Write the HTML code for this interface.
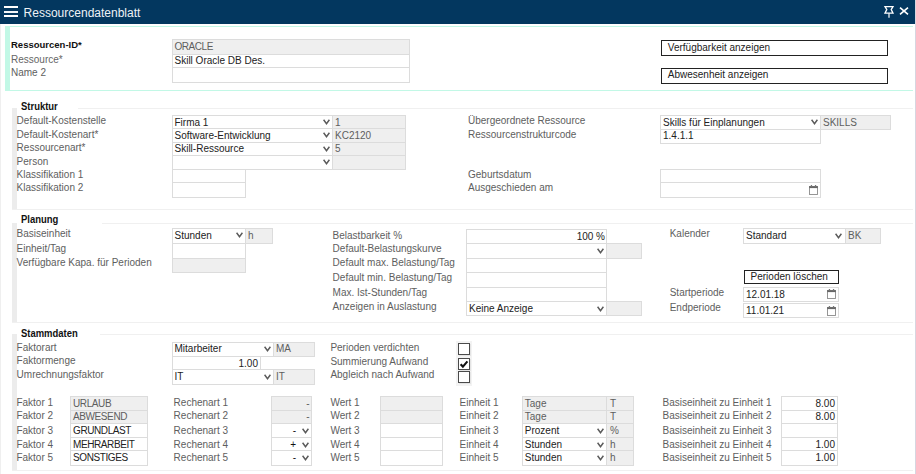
<!DOCTYPE html>
<html><head><meta charset="utf-8"><style>
html,body{margin:0;padding:0;background:#fff;width:916px;height:474px;overflow:hidden;position:relative;font-family:"Liberation Sans",sans-serif}
.b{position:absolute;box-sizing:border-box;border:1px solid #dcdcdc}
.r{position:absolute;display:block}
.t{position:absolute;white-space:nowrap}
</style></head><body>
<div class="r" style="left:0px;top:0px;width:915px;height:24px;background:#03375f"></div>
<div class="r" style="left:915px;top:0px;width:1px;height:474px;background:#d6d6e0"></div>
<div class="r" style="left:0px;top:24px;width:1px;height:450px;background:#efefef"></div>
<div class="r" style="left:4px;top:6px;width:14px;height:2px;background:#fff"></div>
<div class="r" style="left:4px;top:11px;width:14px;height:1.6999999999999993px;background:#f4f6f8"></div>
<div class="r" style="left:4px;top:15px;width:14px;height:2px;background:#fff"></div>
<div class="t" style="left:23.6px;top:7px;font-size:12px;line-height:12px;color:#eef2f6;">Ressourcendatenblatt</div>
<svg class="r" style="left:883px;top:5px" width="12" height="14" viewBox="0 0 12 14"><path d="M2 1.6 H10 L8.2 4.6 L10 8.2 H2 L3.8 4.6 Z" fill="none" stroke="#fff" stroke-width="1.3" stroke-linejoin="miter"/><path d="M6 8.2 V12.8" stroke="#fff" stroke-width="1.2"/></svg>
<svg class="r" style="left:899px;top:7px" width="10" height="8" viewBox="0 0 10 8"><path d="M1 0.6 L9 7.4 M9 0.6 L1 7.4" fill="none" stroke="#fff" stroke-width="1.6"/></svg>
<div class="r" style="left:5px;top:26px;width:908px;height:1px;background:#c2f8e6"></div>
<div class="r" style="left:5px;top:90px;width:908px;height:1px;background:#c2f8e6"></div>
<div class="r" style="left:5px;top:26px;width:5px;height:65px;background:#c2f8e6"></div>
<div class="t" style="left:11px;top:40px;font-size:9.5px;line-height:9.5px;color:#111;font-weight:bold;">Ressourcen-ID*</div>
<div class="t" style="left:11px;top:55px;font-size:10px;line-height:10px;color:#666;">Ressource*</div>
<div class="t" style="left:11px;top:68px;font-size:10px;line-height:10px;color:#5e5e5e;">Name 2</div>
<div class="b" style="left:172px;top:39px;width:238px;height:16px;background:#efefef;border-color:#dcdcdc;"></div>
<div class="b" style="left:172px;top:54px;width:238px;height:14px;background:#fff;border-color:#dcdcdc;"></div>
<div class="b" style="left:172px;top:67px;width:238px;height:16px;background:#fff;border-color:#dcdcdc;"></div>
<div class="t" style="left:174.5px;top:42px;font-size:10px;line-height:10px;color:#5e5e5e;letter-spacing:-0.45px;">ORACLE</div>
<div class="t" style="left:174.5px;top:56px;font-size:10px;line-height:10px;color:#222;">Skill Oracle DB Des.</div>
<div class="b" style="left:661px;top:40px;width:227px;height:16px;background:#fff;border-color:#222;"></div>
<div class="b" style="left:661px;top:68px;width:227px;height:16px;background:#fff;border-color:#222;"></div>
<div class="t" style="left:667.8px;top:43px;font-size:10px;line-height:10px;color:#222;">Verfügbarkeit anzeigen</div>
<div class="t" style="left:667.8px;top:70px;font-size:10px;line-height:10px;color:#222;">Abwesenheit anzeigen</div>
<div class="r" style="left:12px;top:108px;width:5px;height:102px;background:#ececec"></div>
<div class="r" style="left:78px;top:108px;width:835px;height:1px;background:#f0f0f0"></div>
<div class="r" style="left:12px;top:209px;width:901px;height:1px;background:#f0f0f0"></div>
<div class="t" style="left:20.5px;top:101px;font-size:10.5px;line-height:10.5px;color:#111;font-weight:bold;transform:scaleX(0.9);transform-origin:0 0">Struktur</div>
<div class="r" style="left:12px;top:223px;width:5px;height:100px;background:#ececec"></div>
<div class="r" style="left:102px;top:223px;width:811px;height:1px;background:#f0f0f0"></div>
<div class="r" style="left:12px;top:322px;width:901px;height:1px;background:#f0f0f0"></div>
<div class="t" style="left:20.5px;top:214px;font-size:10.5px;line-height:10.5px;color:#111;font-weight:bold;transform:scaleX(0.9);transform-origin:0 0">Planung</div>
<div class="r" style="left:12px;top:334px;width:5px;height:137px;background:#ececec"></div>
<div class="r" style="left:100px;top:334px;width:813px;height:1px;background:#f0f0f0"></div>
<div class="r" style="left:12px;top:470px;width:901px;height:1px;background:#f0f0f0"></div>
<div class="t" style="left:20.5px;top:328px;font-size:10.5px;line-height:10.5px;color:#111;font-weight:bold;transform:scaleX(0.9);transform-origin:0 0">Stammdaten</div>
<div class="t" style="left:16.6px;top:116px;font-size:10px;line-height:10px;color:#5e5e5e;">Default-Kostenstelle</div>
<div class="t" style="left:16.6px;top:130px;font-size:10px;line-height:10px;color:#5e5e5e;">Default-Kostenart*</div>
<div class="t" style="left:16.6px;top:143px;font-size:10px;line-height:10px;color:#5e5e5e;">Ressourcenart*</div>
<div class="t" style="left:16.6px;top:157px;font-size:10px;line-height:10px;color:#5e5e5e;">Person</div>
<div class="t" style="left:16.6px;top:170px;font-size:10px;line-height:10px;color:#5e5e5e;">Klassifikation 1</div>
<div class="t" style="left:16.6px;top:183px;font-size:10px;line-height:10px;color:#5e5e5e;">Klassifikation 2</div>
<div class="b" style="left:332px;top:115px;width:74px;height:14px;background:#efefef;border-color:#dcdcdc;"></div>
<div class="b" style="left:332px;top:128px;width:74px;height:15px;background:#efefef;border-color:#dcdcdc;"></div>
<div class="b" style="left:332px;top:142px;width:74px;height:14px;background:#efefef;border-color:#dcdcdc;"></div>
<div class="b" style="left:332px;top:155px;width:74px;height:15px;background:#efefef;border-color:#dcdcdc;"></div>
<div class="b" style="left:172px;top:115px;width:161px;height:14px;background:#fff;border-color:#dcdcdc;"></div>
<div class="b" style="left:172px;top:128px;width:161px;height:15px;background:#fff;border-color:#dcdcdc;"></div>
<div class="b" style="left:172px;top:142px;width:161px;height:14px;background:#fff;border-color:#dcdcdc;"></div>
<div class="b" style="left:172px;top:155px;width:161px;height:15px;background:#fff;border-color:#dcdcdc;"></div>
<svg class="r" style="left:323px;top:119px" width="7" height="6" viewBox="0 0 7 6"><path d="M0.6 0.8 L3.5 4.7 L6.4 0.8" fill="none" stroke="#5a5a5a" stroke-width="1.45"/></svg>
<div class="t" style="left:174.5px;top:118px;font-size:10px;line-height:10px;color:#222;">Firma 1</div>
<div class="t" style="left:335px;top:118px;font-size:10px;line-height:10px;color:#5e5e5e;">1</div>
<svg class="r" style="left:323px;top:132px" width="7" height="6" viewBox="0 0 7 6"><path d="M0.6 0.8 L3.5 4.7 L6.4 0.8" fill="none" stroke="#5a5a5a" stroke-width="1.45"/></svg>
<div class="t" style="left:174.5px;top:131px;font-size:10px;line-height:10px;color:#222;">Software-Entwicklung</div>
<div class="t" style="left:335px;top:131px;font-size:10px;line-height:10px;color:#5e5e5e;">KC2120</div>
<svg class="r" style="left:323px;top:146px" width="7" height="6" viewBox="0 0 7 6"><path d="M0.6 0.8 L3.5 4.7 L6.4 0.8" fill="none" stroke="#5a5a5a" stroke-width="1.45"/></svg>
<div class="t" style="left:174.5px;top:144px;font-size:10px;line-height:10px;color:#222;">Skill-Ressource</div>
<div class="t" style="left:335px;top:144px;font-size:10px;line-height:10px;color:#5e5e5e;">5</div>
<svg class="r" style="left:323px;top:159px" width="7" height="6" viewBox="0 0 7 6"><path d="M0.6 0.8 L3.5 4.7 L6.4 0.8" fill="none" stroke="#5a5a5a" stroke-width="1.45"/></svg>
<div class="b" style="left:172px;top:169px;width:74px;height:14px;background:#fff;border-color:#dcdcdc;"></div>
<div class="b" style="left:172px;top:182px;width:74px;height:16px;background:#fff;border-color:#dcdcdc;"></div>
<div class="t" style="left:468px;top:116px;font-size:10px;line-height:10px;color:#5e5e5e;">Übergeordnete Ressource</div>
<div class="t" style="left:468px;top:130px;font-size:10px;line-height:10px;color:#5e5e5e;">Ressourcenstrukturcode</div>
<div class="t" style="left:468px;top:170px;font-size:10px;line-height:10px;color:#5e5e5e;">Geburtsdatum</div>
<div class="t" style="left:468px;top:183px;font-size:10px;line-height:10px;color:#5e5e5e;">Ausgeschieden am</div>
<div class="b" style="left:820px;top:115px;width:71px;height:15px;background:#efefef;border-color:#dcdcdc;"></div>
<div class="b" style="left:660px;top:115px;width:161px;height:15px;background:#fff;border-color:#dcdcdc;"></div>
<div class="b" style="left:660px;top:129px;width:161px;height:15px;background:#fff;border-color:#dcdcdc;"></div>
<svg class="r" style="left:811px;top:119px" width="7" height="6" viewBox="0 0 7 6"><path d="M0.6 0.8 L3.5 4.7 L6.4 0.8" fill="none" stroke="#5a5a5a" stroke-width="1.45"/></svg>
<div class="t" style="left:663px;top:118px;font-size:10px;line-height:10px;color:#222;">Skills für Einplanungen</div>
<div class="t" style="left:823px;top:118px;font-size:10px;line-height:10px;color:#5e5e5e;">SKILLS</div>
<div class="t" style="left:663px;top:131px;font-size:10px;line-height:10px;color:#222;">1.4.1.1</div>
<div class="b" style="left:660px;top:169px;width:161px;height:14px;background:#fff;border-color:#dcdcdc;"></div>
<div class="b" style="left:660px;top:182px;width:161px;height:16px;background:#fff;border-color:#dcdcdc;"></div>
<svg class="r" style="left:809px;top:185px" width="9" height="10" viewBox="0 0 9 10"><rect x="0.5" y="1.5" width="8" height="8" fill="#fff" stroke="#8a8a8a" stroke-width="0.9"/><rect x="0.2" y="1.2" width="8.6" height="1.9" fill="#666"/><rect x="1.8" y="0" width="1.3" height="1.6" fill="#777"/><rect x="5.9" y="0" width="1.3" height="1.6" fill="#777"/></svg>
<div class="t" style="left:16.6px;top:229px;font-size:10px;line-height:10px;color:#5e5e5e;">Basiseinheit</div>
<div class="t" style="left:16.6px;top:244px;font-size:10px;line-height:10px;color:#5e5e5e;">Einheit/Tag</div>
<div class="t" style="left:16.6px;top:258px;font-size:10px;line-height:10px;color:#5e5e5e;">Verfügbare Kapa. für Perioden</div>
<div class="b" style="left:245px;top:228px;width:28px;height:16px;background:#efefef;border-color:#dcdcdc;"></div>
<div class="b" style="left:172px;top:228px;width:74px;height:16px;background:#fff;border-color:#dcdcdc;"></div>
<div class="b" style="left:172px;top:243px;width:74px;height:16px;background:#fff;border-color:#dcdcdc;"></div>
<div class="b" style="left:172px;top:258px;width:74px;height:15px;background:#efefef;border-color:#dcdcdc;"></div>
<svg class="r" style="left:236px;top:232px" width="7" height="6" viewBox="0 0 7 6"><path d="M0.6 0.8 L3.5 4.7 L6.4 0.8" fill="none" stroke="#5a5a5a" stroke-width="1.45"/></svg>
<div class="t" style="left:174.5px;top:231px;font-size:10px;line-height:10px;color:#222;">Stunden</div>
<div class="t" style="left:248px;top:231px;font-size:10px;line-height:10px;color:#5e5e5e;">h</div>
<div class="t" style="left:332.6px;top:231px;font-size:10px;line-height:10px;color:#5e5e5e;">Belastbarkeit %</div>
<div class="t" style="left:332.6px;top:244px;font-size:10px;line-height:10px;color:#5e5e5e;">Default-Belastungskurve</div>
<div class="t" style="left:332.6px;top:258px;font-size:10px;line-height:10px;color:#5e5e5e;">Default max. Belastung/Tag</div>
<div class="t" style="left:332.6px;top:273px;font-size:10px;line-height:10px;color:#5e5e5e;">Default min. Belastung/Tag</div>
<div class="t" style="left:332.6px;top:288px;font-size:10px;line-height:10px;color:#5e5e5e;">Max. Ist-Stunden/Tag</div>
<div class="t" style="left:332.6px;top:302px;font-size:10px;line-height:10px;color:#5e5e5e;">Anzeigen in Auslastung</div>
<div class="b" style="left:606px;top:243px;width:36px;height:16px;background:#efefef;border-color:#dcdcdc;"></div>
<div class="b" style="left:606px;top:301px;width:36px;height:15px;background:#efefef;border-color:#dcdcdc;"></div>
<div class="b" style="left:466px;top:229px;width:141px;height:15px;background:#fff;border-color:#dcdcdc;"></div>
<div class="b" style="left:466px;top:243px;width:141px;height:16px;background:#fff;border-color:#dcdcdc;"></div>
<div class="b" style="left:466px;top:258px;width:141px;height:15px;background:#fff;border-color:#dcdcdc;"></div>
<div class="b" style="left:466px;top:272px;width:141px;height:16px;background:#fff;border-color:#dcdcdc;"></div>
<div class="b" style="left:466px;top:287px;width:141px;height:15px;background:#fff;border-color:#dcdcdc;"></div>
<div class="b" style="left:466px;top:301px;width:141px;height:15px;background:#fff;border-color:#dcdcdc;"></div>
<div class="t" style="right:311px;top:232px;font-size:10px;line-height:10px;color:#222;">100 %</div>
<svg class="r" style="left:597px;top:247.5px" width="7" height="6" viewBox="0 0 7 6"><path d="M0.6 0.8 L3.5 4.7 L6.4 0.8" fill="none" stroke="#5a5a5a" stroke-width="1.45"/></svg>
<svg class="r" style="left:597px;top:305.5px" width="7" height="6" viewBox="0 0 7 6"><path d="M0.6 0.8 L3.5 4.7 L6.4 0.8" fill="none" stroke="#5a5a5a" stroke-width="1.45"/></svg>
<div class="t" style="left:469px;top:304px;font-size:10px;line-height:10px;color:#222;">Keine Anzeige</div>
<div class="t" style="left:669.7px;top:229px;font-size:10px;line-height:10px;color:#5e5e5e;">Kalender</div>
<div class="t" style="left:669.7px;top:288px;font-size:10px;line-height:10px;color:#5e5e5e;">Startperiode</div>
<div class="t" style="left:669.7px;top:303px;font-size:10px;line-height:10px;color:#5e5e5e;">Endperiode</div>
<div class="b" style="left:845px;top:228px;width:36px;height:16px;background:#efefef;border-color:#dcdcdc;"></div>
<div class="b" style="left:743px;top:228px;width:103px;height:16px;background:#fff;border-color:#dcdcdc;"></div>
<svg class="r" style="left:835px;top:232.5px" width="7" height="6" viewBox="0 0 7 6"><path d="M0.6 0.8 L3.5 4.7 L6.4 0.8" fill="none" stroke="#5a5a5a" stroke-width="1.45"/></svg>
<div class="t" style="left:746px;top:231px;font-size:10px;line-height:10px;color:#222;">Standard</div>
<div class="t" style="left:848px;top:231px;font-size:10px;line-height:10px;color:#5e5e5e;">BK</div>
<div class="b" style="left:744px;top:270px;width:95px;height:14px;background:#fff;border-color:#222;"></div>
<div class="t" style="left:639.2px;width:300px;text-align:center;top:272px;font-size:10px;line-height:10px;color:#222;">Perioden löschen</div>
<div class="b" style="left:743px;top:287px;width:96px;height:15px;background:#fff;border-color:#dcdcdc;"></div>
<svg class="r" style="left:827px;top:289px" width="9" height="10" viewBox="0 0 9 10"><rect x="0.5" y="1.5" width="8" height="8" fill="#fff" stroke="#8a8a8a" stroke-width="0.9"/><rect x="0.2" y="1.2" width="8.6" height="1.9" fill="#666"/><rect x="1.8" y="0" width="1.3" height="1.6" fill="#777"/><rect x="5.9" y="0" width="1.3" height="1.6" fill="#777"/></svg>
<div class="t" style="left:746px;top:290px;font-size:10px;line-height:10px;color:#222;">12.01.18</div>
<div class="b" style="left:743px;top:303px;width:96px;height:15px;background:#fff;border-color:#dcdcdc;"></div>
<svg class="r" style="left:827px;top:306px" width="9" height="10" viewBox="0 0 9 10"><rect x="0.5" y="1.5" width="8" height="8" fill="#fff" stroke="#8a8a8a" stroke-width="0.9"/><rect x="0.2" y="1.2" width="8.6" height="1.9" fill="#666"/><rect x="1.8" y="0" width="1.3" height="1.6" fill="#777"/><rect x="5.9" y="0" width="1.3" height="1.6" fill="#777"/></svg>
<div class="t" style="left:746px;top:306px;font-size:10px;line-height:10px;color:#222;">11.01.21</div>
<div class="t" style="left:16.6px;top:343px;font-size:10px;line-height:10px;color:#5e5e5e;">Faktorart</div>
<div class="t" style="left:16.6px;top:356px;font-size:10px;line-height:10px;color:#5e5e5e;">Faktormenge</div>
<div class="t" style="left:16.6px;top:370px;font-size:10px;line-height:10px;color:#5e5e5e;">Umrechnungsfaktor</div>
<div class="b" style="left:273px;top:342px;width:42px;height:15px;background:#efefef;border-color:#dcdcdc;"></div>
<div class="b" style="left:273px;top:369px;width:42px;height:16px;background:#efefef;border-color:#dcdcdc;"></div>
<div class="b" style="left:172px;top:342px;width:102px;height:15px;background:#fff;border-color:#dcdcdc;"></div>
<svg class="r" style="left:264px;top:346px" width="7" height="6" viewBox="0 0 7 6"><path d="M0.6 0.8 L3.5 4.7 L6.4 0.8" fill="none" stroke="#5a5a5a" stroke-width="1.45"/></svg>
<div class="b" style="left:172px;top:369px;width:102px;height:16px;background:#fff;border-color:#dcdcdc;"></div>
<svg class="r" style="left:264px;top:374px" width="7" height="6" viewBox="0 0 7 6"><path d="M0.6 0.8 L3.5 4.7 L6.4 0.8" fill="none" stroke="#5a5a5a" stroke-width="1.45"/></svg>
<div class="b" style="left:172px;top:356px;width:89px;height:14px;background:#fff;border-color:#dcdcdc;"></div>
<div class="t" style="left:174.5px;top:344px;font-size:10px;line-height:10px;color:#222;">Mitarbeiter</div>
<div class="t" style="left:276px;top:344px;font-size:10px;line-height:10px;color:#5e5e5e;">MA</div>
<div class="t" style="right:658px;top:359px;font-size:10px;line-height:10px;color:#222;">1.00</div>
<div class="t" style="left:174.5px;top:372px;font-size:10px;line-height:10px;color:#222;">IT</div>
<div class="t" style="left:276px;top:372px;font-size:10px;line-height:10px;color:#5e5e5e;">IT</div>
<div class="t" style="left:330.4px;top:343px;font-size:10px;line-height:10px;color:#5e5e5e;">Perioden verdichten</div>
<div class="t" style="left:330.4px;top:357px;font-size:10px;line-height:10px;color:#5e5e5e;">Summierung Aufwand</div>
<div class="t" style="left:330.4px;top:370px;font-size:10px;line-height:10px;color:#5e5e5e;">Abgleich nach Aufwand</div>
<div class="r" style="left:456px;top:341px;width:16px;height:45px;background:#f3f3f3"></div>
<div class="b" style="left:458px;top:343px;width:12px;height:12px;background:#fff;border-color:#4a4a4a;box-shadow:1px 1px 0 #e4e4e4"></div>
<div class="b" style="left:458px;top:358px;width:12px;height:12px;background:#fff;border-color:#4a4a4a;box-shadow:1px 1px 0 #e4e4e4"></div>
<svg class="r" style="left:458px;top:358px" width="12" height="12" viewBox="0 0 12 12"><path d="M2.6 6.2 L4.9 8.6 L9.4 3.4" fill="none" stroke="#111" stroke-width="2.1"/></svg>
<div class="b" style="left:458px;top:371px;width:12px;height:12px;background:#fff;border-color:#4a4a4a;box-shadow:1px 1px 0 #e4e4e4"></div>
<div class="b" style="left:70px;top:396px;width:78px;height:15px;background:#efefef;border-color:#dcdcdc;"></div>
<div class="b" style="left:70px;top:410px;width:78px;height:14px;background:#efefef;border-color:#dcdcdc;"></div>
<div class="b" style="left:70px;top:423px;width:78px;height:15px;background:#fff;border-color:#dcdcdc;"></div>
<div class="b" style="left:70px;top:437px;width:78px;height:14px;background:#fff;border-color:#dcdcdc;"></div>
<div class="b" style="left:70px;top:450px;width:78px;height:16px;background:#fff;border-color:#dcdcdc;"></div>
<div class="b" style="left:271px;top:396px;width:41px;height:15px;background:#efefef;border-color:#dcdcdc;"></div>
<div class="b" style="left:271px;top:410px;width:41px;height:14px;background:#efefef;border-color:#dcdcdc;"></div>
<div class="b" style="left:271px;top:423px;width:41px;height:15px;background:#fff;border-color:#dcdcdc;"></div>
<div class="b" style="left:271px;top:437px;width:41px;height:14px;background:#fff;border-color:#dcdcdc;"></div>
<div class="b" style="left:271px;top:450px;width:41px;height:16px;background:#fff;border-color:#dcdcdc;"></div>
<div class="b" style="left:380px;top:396px;width:63px;height:15px;background:#efefef;border-color:#dcdcdc;"></div>
<div class="b" style="left:380px;top:410px;width:63px;height:14px;background:#efefef;border-color:#dcdcdc;"></div>
<div class="b" style="left:380px;top:423px;width:63px;height:15px;background:#fff;border-color:#dcdcdc;"></div>
<div class="b" style="left:380px;top:437px;width:63px;height:14px;background:#fff;border-color:#dcdcdc;"></div>
<div class="b" style="left:380px;top:450px;width:63px;height:16px;background:#fff;border-color:#dcdcdc;"></div>
<div class="b" style="left:606px;top:396px;width:28px;height:15px;background:#efefef;border-color:#dcdcdc;"></div>
<div class="b" style="left:606px;top:410px;width:28px;height:14px;background:#efefef;border-color:#dcdcdc;"></div>
<div class="b" style="left:606px;top:423px;width:28px;height:15px;background:#efefef;border-color:#dcdcdc;"></div>
<div class="b" style="left:606px;top:437px;width:28px;height:14px;background:#efefef;border-color:#dcdcdc;"></div>
<div class="b" style="left:606px;top:450px;width:28px;height:16px;background:#efefef;border-color:#dcdcdc;"></div>
<div class="b" style="left:522px;top:396px;width:85px;height:15px;background:#efefef;border-color:#dcdcdc;"></div>
<div class="b" style="left:522px;top:410px;width:85px;height:14px;background:#efefef;border-color:#dcdcdc;"></div>
<div class="b" style="left:522px;top:423px;width:85px;height:15px;background:#fff;border-color:#dcdcdc;"></div>
<div class="b" style="left:522px;top:437px;width:85px;height:14px;background:#fff;border-color:#dcdcdc;"></div>
<div class="b" style="left:522px;top:450px;width:85px;height:16px;background:#fff;border-color:#dcdcdc;"></div>
<div class="b" style="left:781px;top:396px;width:57px;height:15px;background:#fff;border-color:#dcdcdc;"></div>
<div class="b" style="left:781px;top:410px;width:57px;height:14px;background:#fff;border-color:#dcdcdc;"></div>
<div class="b" style="left:781px;top:423px;width:57px;height:15px;background:#fff;border-color:#dcdcdc;"></div>
<div class="b" style="left:781px;top:437px;width:57px;height:14px;background:#fff;border-color:#dcdcdc;"></div>
<div class="b" style="left:781px;top:450px;width:57px;height:16px;background:#fff;border-color:#dcdcdc;"></div>
<div class="t" style="left:16.4px;top:398px;font-size:10px;line-height:10px;color:#5e5e5e;">Faktor 1</div>
<div class="t" style="left:73px;top:399px;font-size:10px;line-height:10px;color:#5e5e5e;letter-spacing:-0.4px;">URLAUB</div>
<div class="t" style="left:173.6px;top:398px;font-size:10px;line-height:10px;color:#5e5e5e;">Rechenart 1</div>
<div class="t" style="right:606.5px;top:399px;font-size:10px;line-height:10px;color:#5e5e5e;">-</div>
<div class="t" style="left:330.4px;top:398px;font-size:10px;line-height:10px;color:#5e5e5e;">Wert 1</div>
<div class="t" style="left:459.6px;top:398px;font-size:10px;line-height:10px;color:#5e5e5e;">Einheit 1</div>
<div class="t" style="left:524.8px;top:399px;font-size:10px;line-height:10px;color:#5e5e5e;">Tage</div>
<div class="t" style="left:609.9px;top:399px;font-size:10px;line-height:10px;color:#5e5e5e;">T</div>
<div class="t" style="left:662.5px;top:398px;font-size:10px;line-height:10px;color:#5e5e5e;">Basiseinheit zu Einheit 1</div>
<div class="t" style="right:81px;top:399px;font-size:10px;line-height:10px;color:#222;">8.00</div>
<div class="t" style="left:16.4px;top:411px;font-size:10px;line-height:10px;color:#5e5e5e;">Faktor 2</div>
<div class="t" style="left:73px;top:412px;font-size:10px;line-height:10px;color:#5e5e5e;letter-spacing:-0.4px;">ABWESEND</div>
<div class="t" style="left:173.6px;top:411px;font-size:10px;line-height:10px;color:#5e5e5e;">Rechenart 2</div>
<div class="t" style="right:606.5px;top:412px;font-size:10px;line-height:10px;color:#5e5e5e;">-</div>
<div class="t" style="left:330.4px;top:411px;font-size:10px;line-height:10px;color:#5e5e5e;">Wert 2</div>
<div class="t" style="left:459.6px;top:411px;font-size:10px;line-height:10px;color:#5e5e5e;">Einheit 2</div>
<div class="t" style="left:524.8px;top:412px;font-size:10px;line-height:10px;color:#5e5e5e;">Tage</div>
<div class="t" style="left:609.9px;top:412px;font-size:10px;line-height:10px;color:#5e5e5e;">T</div>
<div class="t" style="left:662.5px;top:411px;font-size:10px;line-height:10px;color:#5e5e5e;">Basiseinheit zu Einheit 2</div>
<div class="t" style="right:81px;top:412px;font-size:10px;line-height:10px;color:#222;">8.00</div>
<div class="t" style="left:16.4px;top:426px;font-size:10px;line-height:10px;color:#5e5e5e;">Faktor 3</div>
<div class="t" style="left:73px;top:426px;font-size:10px;line-height:10px;color:#222;letter-spacing:-0.4px;">GRUNDLAST</div>
<div class="t" style="left:173.6px;top:426px;font-size:10px;line-height:10px;color:#5e5e5e;">Rechenart 3</div>
<div class="t" style="right:620px;top:426px;font-size:10px;line-height:10px;color:#111;">-</div>
<svg class="r" style="left:302px;top:428px" width="7" height="6" viewBox="0 0 7 6"><path d="M0.6 0.8 L3.5 4.7 L6.4 0.8" fill="none" stroke="#5a5a5a" stroke-width="1.45"/></svg>
<div class="t" style="left:330.4px;top:426px;font-size:10px;line-height:10px;color:#5e5e5e;">Wert 3</div>
<div class="t" style="left:459.6px;top:426px;font-size:10px;line-height:10px;color:#5e5e5e;">Einheit 3</div>
<div class="t" style="left:524.8px;top:426px;font-size:10px;line-height:10px;color:#222;">Prozent</div>
<div class="t" style="left:609.9px;top:426px;font-size:10px;line-height:10px;color:#5e5e5e;">%</div>
<svg class="r" style="left:597px;top:428px" width="7" height="6" viewBox="0 0 7 6"><path d="M0.6 0.8 L3.5 4.7 L6.4 0.8" fill="none" stroke="#5a5a5a" stroke-width="1.45"/></svg>
<div class="t" style="left:662.5px;top:426px;font-size:10px;line-height:10px;color:#5e5e5e;">Basiseinheit zu Einheit 3</div>
<div class="t" style="left:16.4px;top:440px;font-size:10px;line-height:10px;color:#5e5e5e;">Faktor 4</div>
<div class="t" style="left:73px;top:440px;font-size:10px;line-height:10px;color:#222;letter-spacing:-0.4px;">MEHRARBEIT</div>
<div class="t" style="left:173.6px;top:440px;font-size:10px;line-height:10px;color:#5e5e5e;">Rechenart 4</div>
<div class="t" style="right:620px;top:440px;font-size:10px;line-height:10px;color:#111;">+</div>
<svg class="r" style="left:302px;top:442px" width="7" height="6" viewBox="0 0 7 6"><path d="M0.6 0.8 L3.5 4.7 L6.4 0.8" fill="none" stroke="#5a5a5a" stroke-width="1.45"/></svg>
<div class="t" style="left:330.4px;top:440px;font-size:10px;line-height:10px;color:#5e5e5e;">Wert 4</div>
<div class="t" style="left:459.6px;top:440px;font-size:10px;line-height:10px;color:#5e5e5e;">Einheit 4</div>
<div class="t" style="left:524.8px;top:440px;font-size:10px;line-height:10px;color:#222;">Stunden</div>
<div class="t" style="left:609.9px;top:440px;font-size:10px;line-height:10px;color:#5e5e5e;">h</div>
<svg class="r" style="left:597px;top:442px" width="7" height="6" viewBox="0 0 7 6"><path d="M0.6 0.8 L3.5 4.7 L6.4 0.8" fill="none" stroke="#5a5a5a" stroke-width="1.45"/></svg>
<div class="t" style="left:662.5px;top:440px;font-size:10px;line-height:10px;color:#5e5e5e;">Basiseinheit zu Einheit 4</div>
<div class="t" style="right:81px;top:440px;font-size:10px;line-height:10px;color:#222;">1.00</div>
<div class="t" style="left:16.4px;top:453px;font-size:10px;line-height:10px;color:#5e5e5e;">Faktor 5</div>
<div class="t" style="left:73px;top:453px;font-size:10px;line-height:10px;color:#222;letter-spacing:-0.4px;">SONSTIGES</div>
<div class="t" style="left:173.6px;top:453px;font-size:10px;line-height:10px;color:#5e5e5e;">Rechenart 5</div>
<div class="t" style="right:620px;top:453px;font-size:10px;line-height:10px;color:#111;">-</div>
<svg class="r" style="left:302px;top:455px" width="7" height="6" viewBox="0 0 7 6"><path d="M0.6 0.8 L3.5 4.7 L6.4 0.8" fill="none" stroke="#5a5a5a" stroke-width="1.45"/></svg>
<div class="t" style="left:330.4px;top:453px;font-size:10px;line-height:10px;color:#5e5e5e;">Wert 5</div>
<div class="t" style="left:459.6px;top:453px;font-size:10px;line-height:10px;color:#5e5e5e;">Einheit 5</div>
<div class="t" style="left:524.8px;top:453px;font-size:10px;line-height:10px;color:#222;">Stunden</div>
<div class="t" style="left:609.9px;top:453px;font-size:10px;line-height:10px;color:#5e5e5e;">h</div>
<svg class="r" style="left:597px;top:455px" width="7" height="6" viewBox="0 0 7 6"><path d="M0.6 0.8 L3.5 4.7 L6.4 0.8" fill="none" stroke="#5a5a5a" stroke-width="1.45"/></svg>
<div class="t" style="left:662.5px;top:453px;font-size:10px;line-height:10px;color:#5e5e5e;">Basiseinheit zu Einheit 5</div>
<div class="t" style="right:81px;top:453px;font-size:10px;line-height:10px;color:#222;">1.00</div>
</body></html>
